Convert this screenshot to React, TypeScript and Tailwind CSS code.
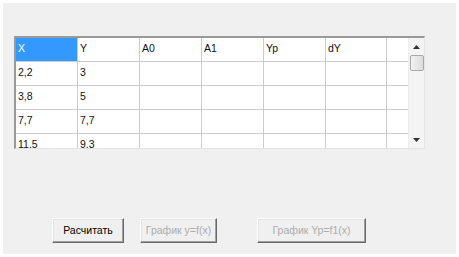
import React from "react";

const cols = ["X", "Y", "A0", "A1", "Yp", "dY"];
const rows = [
  ["2,2", "3"],
  ["3,8", "5"],
  ["7,7", "7,7"],
  ["11,5", "9,3"],
];

function Btn({ label, w, disabled }: { label: string; w: string; disabled?: boolean }) {
  return (
    <button
      className={`${w} h-[25px] border border-t-white border-l-white border-r-[#696969] border-b-[#696969] bg-[#f0f0f0] text-[10.5px] leading-none shadow-[inset_-1px_-1px_0_#a0a0a0,inset_1px_1px_0_#e3e3e3] ${
        disabled ? "text-[#acacac]" : "text-black"
      }`}
    >
      {label}
    </button>
  );
}

export default function App() {
  return (
    <div
      className="h-[257px] w-[459px] bg-white p-[3px]"
      style={{ fontFamily: '"Liberation Sans", Arial, sans-serif' }}
    >
      <div className="flex h-[251px] w-[453px] flex-col bg-[#f0f0f0] pl-[11px] pt-[33px]">
        {/* grid */}
        <div className="flex h-[113px] w-[411px] overflow-hidden border-l-2 border-t-2 border-b border-r border-l-[#999999] border-t-[#999999] border-b-[#e3e3e3] border-r-[#e3e3e3] bg-white">
          <div className="flex w-[392px] flex-col">
            <div className="flex h-[24px] shrink-0 border-b border-[#cccccc]">
              {cols.map((c, i) => (
                <div
                  key={c}
                  className={`h-full border-r border-[#cccccc] pl-[2px] pt-[4px] text-[10.5px] leading-[13px] ${
                    i === 5 ? "w-[61px]" : "w-[62px]"
                  } ${i === 0 ? "bg-[#3399ff] text-white" : "text-[#111]"}`}
                >
                  {c}
                </div>
              ))}
            </div>
            {rows.map((r, ri) => (
              <div key={ri} className="flex h-[24px] shrink-0 border-b border-[#cccccc]">
                {cols.map((c, i) => (
                  <div
                    key={c}
                    className={`h-full border-r border-[#cccccc] pl-[2px] pt-[4px] text-[10.5px] leading-[13px] text-[#111] ${
                      i === 5 ? "w-[61px]" : "w-[62px]"
                    }`}
                  >
                    {r[i] ?? ""}
                  </div>
                ))}
              </div>
            ))}
          </div>
          <div className="w-[0px] flex-1" />
          {/* scrollbar */}
          <div className="relative flex w-[16px] flex-col items-center border-l border-[#ececec] bg-[#f4f4f4]">
            <div className="flex h-[17px] w-full items-center justify-center">
              <svg width="7" height="4" viewBox="0 0 7 4">
                <path d="M3.5 0 L7 4 L0 4 Z" fill="#333" />
              </svg>
            </div>
            <div className="h-[16px] w-[14px] rounded-[2px] border border-[#a9a9a9] bg-gradient-to-r from-[#f2f2f2] to-[#dcdcdc]" />
            <div className="flex-1" />
            <div className="flex h-[17px] w-full items-center justify-center">
              <svg width="7" height="4" viewBox="0 0 7 4">
                <path d="M0 0 L7 0 L3.5 4 Z" fill="#333" />
              </svg>
            </div>
          </div>
        </div>
        {/* buttons */}
        <div className="mt-[69px] flex items-start pl-[38px]">
          <Btn label="Расчитать" w="w-[72px]" />
          <div className="w-[16px]" />
          <Btn label="График y=f(x)" w="w-[77px]" disabled />
          <div className="w-[40px]" />
          <Btn label="График Yp=f1(x)" w="w-[109px]" disabled />
        </div>
      </div>
    </div>
  );
}
